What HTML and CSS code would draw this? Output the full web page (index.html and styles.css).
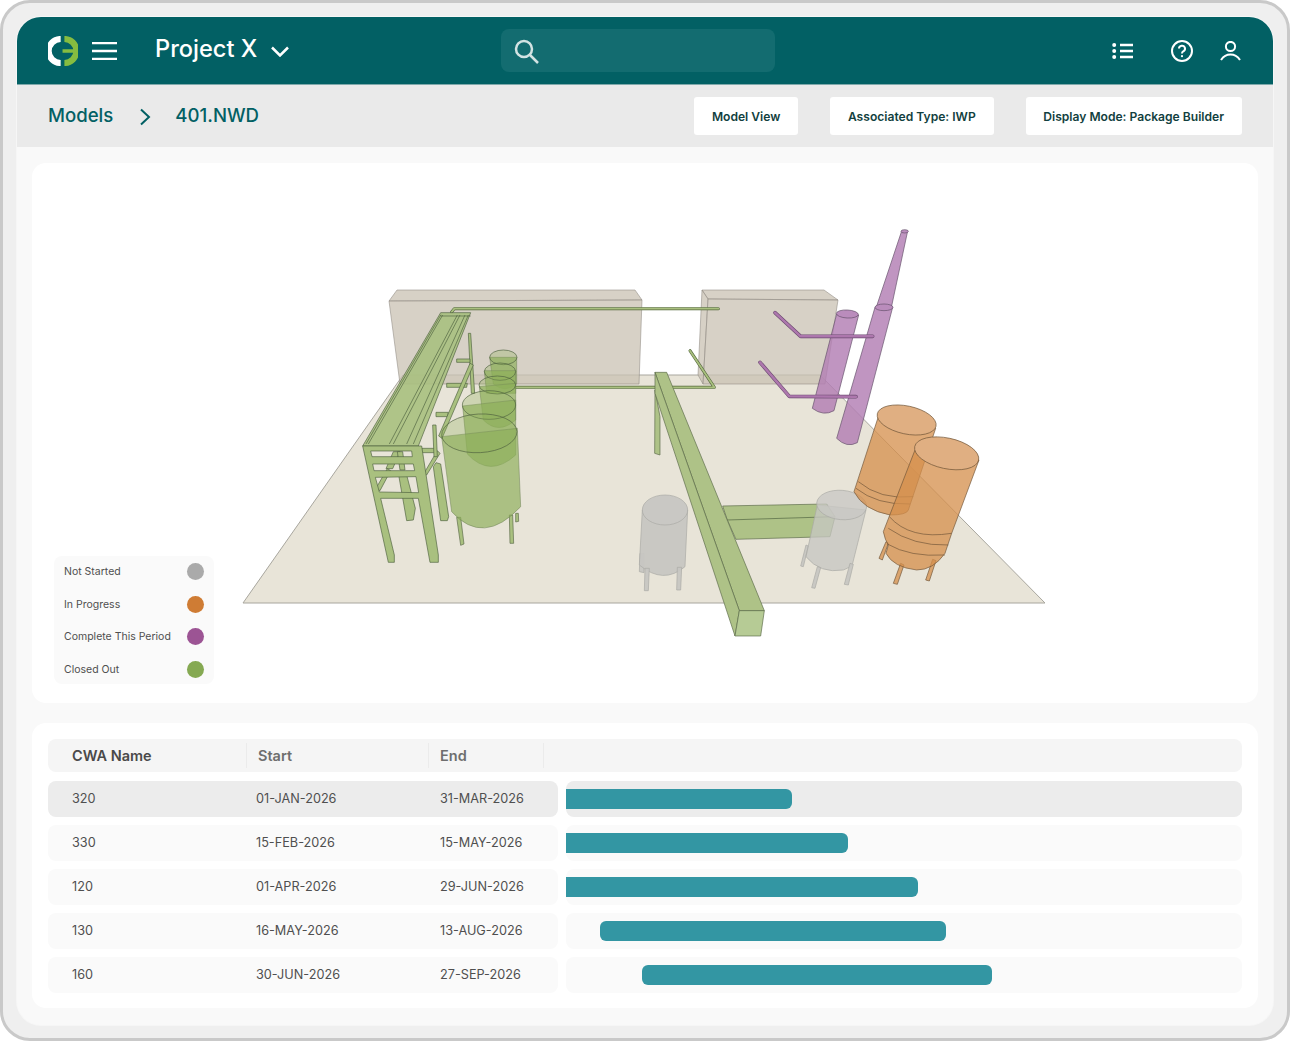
FILE: index.html
```html
<!DOCTYPE html>
<html lang="en">
<head>
<meta charset="utf-8">
<title>Project X</title>
<link rel="stylesheet" href="styles.css">
</head>
<body>
<div class="frame">
  <div class="app">
    <header class="topbar">
      <svg class="logo" width="30" height="30" viewBox="0 0 32 32">
        <path class="logo-w" d="M13.5 3.2A12.8 12.8 0 0 0 13.5 28.8"/>
        <path class="logo-g" d="M17.5 3.2A12.8 12.8 0 0 1 17.5 28.8"/>
        <path class="logo-b" d="M15.5 16H28"/>
      </svg>
      <svg class="ico burger" width="25" height="18" viewBox="0 0 25 18"><path d="M0 1H25M0 9H25M0 17H25"/></svg>
      <span class="project">Project X</span>
      <svg class="ico caret" width="18" height="11" viewBox="0 0 18 11"><path d="M1 1.5L9 9.5L17 1.5"/></svg>
      <div class="search">
        <svg class="ico soft" width="26" height="26" viewBox="0 0 26 26"><circle cx="11" cy="11" r="8"/><path d="M17 17L25 25"/></svg>
      </div>
      <div class="top-icons">
        <svg class="ico list" width="21" height="16" viewBox="0 0 21 16"><path d="M8 2H21M8 8H21M8 14H21"/><circle class="dot" cx="2.2" cy="2" r="2"/><circle class="dot" cx="2.2" cy="8" r="2"/><circle class="dot" cx="2.2" cy="14" r="2"/></svg>
        <svg class="ico thin" width="22" height="22" viewBox="0 0 22 22"><circle cx="11" cy="11" r="10"/><path d="M8 8.6A3 3 0 1 1 12.2 11.4C11.3 11.9 11 12.4 11 13.4"/><circle class="dot" cx="11" cy="16.2" r="1.1"/></svg>
        <svg class="ico thin" width="21" height="20" viewBox="0 0 21 20"><circle cx="10.5" cy="5.5" r="4.6"/><path d="M1 19C4 14.5 7 13.5 10.5 13.5S17 14.5 20 19"/></svg>
      </div>
    </header>

    <nav class="subbar">
      <a class="crumb">Models</a>
      <svg class="crumb-sep" width="12" height="18" viewBox="0 0 12 18"><path d="M2 1.5L10 9L2 16.5"/></svg>
      <a class="crumb">401.NWD</a>
      <div class="actions">
        <button class="btn">Model View</button>
        <button class="btn">Associated Type: IWP</button>
        <button class="btn">Display Mode: Package Builder</button>
      </div>
    </nav>

    <main class="content">
      <section class="card viewer">
        <svg class="scene" width="1226" height="540" viewBox="32 163 1226 540">
          <polygon class="floor" points="243,603 403,375 820,375 1045,603"/>

          <g class="walls">
            <polygon points="397,290 635,290 642,300 389,301"/>
            <polygon points="389,301 642,300 639,384 400,384"/>
            <polygon points="702,290 824,290 838,300 708,299"/>
            <polygon points="702,290 708,299 703,384 698,375"/>
            <polygon points="708,299 838,300 825,384 703,384"/>
          </g>

          <g transform="translate(350 280) scale(.33333)">
            <g class="pipe-g">
              <polyline class="o" points="305,96 313,86 1105,86"/><polyline class="i" points="305,96 313,86 1105,86"/>
              <polyline class="o" points="498,322 1093,322 1020,212"/><polyline class="i" points="498,322 1093,322 1020,212"/>
            </g>
            <g class="gr">
              <polygon points="355,160 362,160 374,340 364,340"/>
              <polygon points="320,237 360,237 360,247 320,247"/>
              <polygon points="290,310 352,310 350,322 290,322"/>
              <polygon points="258,397 295,397 292,410 258,410"/>
              <polygon points="215,505 258,505 258,518 215,518"/>
              <polygon points="360,250 370,255 276,475 266,468"/>
              <polygon points="262,512 270,520 230,585 222,580"/>
              <polygon points="248,435 258,435 262,530 252,530"/>
              <polygon points="250,560 258,548 272,552 296,710 292,722 272,722"/>
              <polygon points="146,585 170,585 196,685 190,720 170,722"/>
              <polygon points="108,566 130,515 150,515 128,566"/>
              <polygon points="142,515 158,515 165,570 150,570"/>
              <polygon points="78,625 112,566 122,572 90,632"/>
              <polygon class="deck" points="38,498 272,98 362,98 205,498"/>
              <path class="ln" d="M48 492L273 104M55 492L278 105M118 492L322 105M130 492L330 105M170 492L345 105M190 492L355 105M272 108H362"/>
              <path class="fr" fill-rule="evenodd" d="M38 498H215L265 825V847H240L205 655H92L133 825V847H115ZM62 513L66 530H187L185 513ZM68 552L72 572H194L190 552ZM76 592L88 636 206 638 198 590Z"/>
            </g>
            <g class="gt">
              <path d="M419 232L430 312Q465 340 500 312V232Z"/><ellipse cx="460" cy="232" rx="41" ry="22"/>
              <path d="M403 272L410 340H497V272Z"/><ellipse cx="450" cy="275" rx="47" ry="26"/>
              <path d="M388 320L400 420Q445 465 497 420V310Z"/><ellipse cx="442" cy="315" rx="55" ry="27"/>
              <path d="M338 378L352 522Q420 595 497 525V360Z"/><ellipse cx="417" cy="375" rx="80" ry="43"/>
              <polygon class="leg" points="320,712 332,712 342,792 332,796"/>
              <polygon class="leg" points="478,705 488,705 491,790 480,790"/>
              <polygon class="leg" points="497,700 505,700 506,724 497,726"/>
              <path d="M275 470L305 695Q400 800 512 680L502 445Z"/><ellipse cx="388" cy="460" rx="113" ry="58" transform="rotate(-3 388 460)"/>
            </g>
          </g>

          <g transform="translate(630 220) scale(.33333)">
            <g class="gr beam">
              <polygon points="75,510 90,590 90,705 74,700"/>
              <polygon points="278,858 590,852 615,890 600,950 318,958 292,900"/>
              <path class="ln" d="M292 900L615 890 590 852"/>
              <polygon points="75,457 110,457 403,1172 328,1172"/>
              <polygon points="75,457 328,1172 315,1248 75,520"/>
              <polygon class="front" points="328,1172 403,1172 392,1248 315,1248"/>
            </g>
            <g class="grey">
              <polygon points="30,1000 42,1000 42,1058 28,1055"/>
              <path d="M37 870L28 1035Q100 1095 165 1040L173 870Z"/><ellipse cx="105" cy="870" rx="68" ry="45"/>
              <polygon points="45,1045 58,1045 55,1112 43,1112"/>
              <polygon points="142,1042 155,1042 152,1110 140,1110"/>
              <polygon points="512,1038 528,975 535,978 520,1040"/>
              <path class="see" d="M562 855L528 1010Q570 1062 640 1050Q665 1040 668 1030L708 870Z"/><ellipse class="see" cx="635" cy="855" rx="75" ry="44" transform="rotate(5 635 855)"/>
              <polygon points="545,1103 562,1040 572,1043 555,1105"/>
              <polygon points="643,1093 660,1030 670,1033 655,1095"/>
            </g>
            <g class="orange">
              <polygon points="747,1015 768,965 775,970 757,1020"/>
              <polygon points="790,1090 812,1030 822,1035 802,1093"/>
              <polygon points="887,1080 908,1018 918,1022 898,1083"/>
              <path d="M745 590L672 815Q700 870 780 885Q830 885 835 870L917 625Z"/><ellipse cx="830" cy="600" rx="90" ry="42" transform="rotate(12 830 600)"/>
              <path class="ln" d="M685 785Q750 840 850 830M678 805Q740 855 840 852"/>
              <path d="M855 690L760 935Q765 960 775 975L768 1000Q790 1042 860 1050Q910 1050 945 1000L965 940L1047 720Z"/><ellipse cx="950" cy="700" rx="98" ry="46" transform="rotate(12 950 700)"/>
              <path class="ln" d="M778 890Q840 960 965 940M775 925Q850 978 955 975M772 972Q840 1012 945 1005"/>
            </g>
            <g class="purple">
              <path d="M620 282L547 565Q580 590 612 572L686 285Z"/><ellipse cx="652" cy="282" rx="33" ry="12" transform="rotate(3 652 282)"/>
              <polygon points="740,258 815,33 833,33 785,258"/><ellipse cx="824" cy="34" rx="11" ry="5"/>
              <path d="M735 262L620 655Q650 685 682 668L788 262Z"/><ellipse cx="762" cy="262" rx="27" ry="10"/>
            </g>
            <g class="pipe-p">
              <polyline class="o" points="435,278 512,349 728,349"/><polyline class="i" points="435,278 512,349 728,349"/>
              <polyline class="o" points="390,427 478,529 678,530"/><polyline class="i" points="390,427 478,529 678,530"/>
            </g>
          </g>
        </svg>

        <ul class="legend">
          <li class="legend-row">Not Started<i class="swatch s-grey"></i></li>
          <li class="legend-row">In Progress<i class="swatch s-orange"></i></li>
          <li class="legend-row">Complete This Period<i class="swatch s-purple"></i></li>
          <li class="legend-row">Closed Out<i class="swatch s-green"></i></li>
        </ul>
      </section>

      <section class="card schedule">
        <div class="thead">
          <span class="th th-name">CWA Name</span>
          <span class="th th-start">Start</span>
          <span class="th th-end">End</span>
        </div>
        <div class="row is-active">
          <div class="info"><span>320</span><span>01-JAN-2026</span><span>31-MAR-2026</span></div>
          <div class="track"><div class="bar flat" style="width:226px"></div></div>
        </div>
        <div class="row">
          <div class="info"><span>330</span><span>15-FEB-2026</span><span>15-MAY-2026</span></div>
          <div class="track"><div class="bar flat" style="width:282px"></div></div>
        </div>
        <div class="row">
          <div class="info"><span>120</span><span>01-APR-2026</span><span>29-JUN-2026</span></div>
          <div class="track"><div class="bar flat" style="width:352px"></div></div>
        </div>
        <div class="row">
          <div class="info"><span>130</span><span>16-MAY-2026</span><span>13-AUG-2026</span></div>
          <div class="track"><div class="bar" style="margin-left:34px;width:346px"></div></div>
        </div>
        <div class="row">
          <div class="info"><span>160</span><span>30-JUN-2026</span><span>27-SEP-2026</span></div>
          <div class="track"><div class="bar" style="margin-left:76px;width:350px"></div></div>
        </div>
      </section>
    </main>
  </div>
</div>
</body>
</html>
```

FILE: styles.css
```css
* { box-sizing: border-box; }
html, body { margin: 0; background: #fff; }
body { font-family: Inter, "Liberation Sans", sans-serif; color: #4f4f4f; }

.frame {
  width: 1290px; height: 1041px;
  border: 3px solid #c9c9c9; border-radius: 30px;
  background: #efefef;
  padding: 14px 14px 13px;
}
.app {
  height: 100%; border-radius: 24px; overflow: hidden;
  background: #f9f9f9;
  display: flex; flex-direction: column;
  box-shadow: 0 0 0 1px #f6f6f6;
}

/* top bar */
.topbar {
  flex: none; height: 68px; background: #026064;
  border-bottom: 1px solid #7fa9ab;
  display: flex; align-items: center;
  padding-left: 31px; padding-right: 32px;
}
.logo { flex: none; margin-right: 14px; margin-top: 1px; }
.logo path { fill: none; }
.logo-w { stroke: #fff; stroke-width: 6.5; }
.logo-g { stroke: #86bc40; stroke-width: 6.5; }
.logo-b { stroke: #86bc40; stroke-width: 3.5; }
.ico { flex: none; display: block; }
.ico path, .ico circle { fill: none; stroke: #fff; stroke-width: 2.5; }
.ico.thin path, .ico.thin circle { stroke-width: 2; }
.ico.soft path, .ico.soft circle { stroke: #d3e3e3; }
.ico circle.dot { fill: #fff; stroke: none; }
.burger { margin-top: 1px; }
.project {
  margin-left: 38px; font-size: 23.6px; font-weight: 500; color: #fff;
  line-height: 30px; white-space: nowrap; width: 102px; margin-top: -3px;
}
.caret { margin-left: 14px; margin-top: 1px; }
.search {
  margin-left: 212px; width: 274px; height: 43px;
  background: #136c70; border-radius: 8px;
  display: flex; align-items: center; padding-left: 12px;
}
.top-icons {
  margin-left: auto; display: flex; align-items: center; gap: 27px;
}
.list { margin-right: 11px; }

/* breadcrumb bar */
.subbar {
  flex: none; height: 62px; background: #eaeaea;
  display: flex; align-items: center; padding: 0 31px;
}
.crumb { font-size: 18.6px; font-weight: 500; color: #026064; line-height: 24px; margin-top: -2px; }
.crumb-sep { margin: 1px 24px 0 26px; flex: none; }
.crumb-sep path { fill: none; stroke: #026064; stroke-width: 2; }
.actions { margin-left: auto; display: flex; gap: 32px; }
.btn {
  height: 38px; border: 0; border-radius: 3px; background: #fff;
  padding: 0 18px 0 17.5px; font: 600 12.1px Inter, "Liberation Sans", sans-serif;
  color: #123f40;
}

/* content */
.content {
  flex: 1; padding: 16px 15px 17px;
  display: flex; flex-direction: column; gap: 20px;
}
.card { background: #fff; border-radius: 14px; }
.viewer { position: relative; height: 540px; flex: none; overflow: hidden; }
.scene { display: block; }

/* 3D model */
.floor { fill: #e8e4d8; stroke: #a8a69e; stroke-width: 1; stroke-linejoin: round; }
.walls polygon { fill: #c9c1b3; fill-opacity: .75; stroke: #8f8b83; stroke-opacity: .7; stroke-width: .8; }
.gr polygon, .gr path.fr { fill: #a9c07f; stroke: #4f6240; stroke-width: 2; stroke-linejoin: round; }
.gr .deck { fill: #a9c07f; fill-opacity: .9; }
.gr .ln { fill: none; stroke: #4f6240; stroke-width: 2; }
.beam polygon { fill: #aec287; stroke: #5a6a48; }
.beam .front { fill: #b6cb95; }
.gt path { fill: #8db05a; fill-opacity: .68; stroke: #6d8058; stroke-width: 1.5; }
.gt ellipse { fill: #8db05a; fill-opacity: .3; stroke: #4f6240; stroke-width: 2; }
.gt .leg { fill: #a9c07f; stroke: #5a6a48; stroke-width: 2; }
.grey path, .grey polygon { fill: #c7c6c2; stroke: #a9a9a5; stroke-width: 2; fill-opacity: .95; }
.grey ellipse { fill: #c9c8c4; stroke: #a9a9a5; stroke-width: 2; }
.grey .see { fill-opacity: .78; }
.orange path, .orange polygon { fill: #d58f4c; fill-opacity: .76; stroke: #6f5538; stroke-width: 2; }
.orange ellipse { fill: #e0af82; stroke: #6f5538; stroke-width: 2; }
.orange path.ln { fill: none; }
.purple path, .purple polygon { fill: #b27eb3; fill-opacity: .82; stroke: #64506a; stroke-width: 2; }
.purple ellipse { fill: #ba8cbc; stroke: #64506a; stroke-width: 2; }
.pipe-g polyline, .pipe-p polyline { fill: none; stroke-linecap: round; stroke-linejoin: round; }
.pipe-g .o { stroke: #56693f; stroke-width: 9; }
.pipe-g .i { stroke: #a9c07f; stroke-width: 5.5; }
.pipe-p .o { stroke: #6b4a70; stroke-width: 11; }
.pipe-p .i { stroke: #ad77ad; stroke-width: 7.5; }

/* legend */
.legend {
  position: absolute; left: 22px; bottom: 19px;
  width: 160px; height: 128px; margin: 0; padding: 7px 10px 0;
  list-style: none; background: #fafafa; border-radius: 8px;
  display: flex; flex-direction: column; gap: 15.6px;
}
.legend-row {
  display: flex; align-items: center; justify-content: space-between;
  font-size: 10.5px; line-height: 17px; color: #4f4f4f;
}
.swatch { width: 17px; height: 17px; border-radius: 50%; flex: none; }
.s-grey { background: #aaa; }
.s-orange { background: #cf7c34; }
.s-purple { background: #9c5494; }
.s-green { background: #85a952; }

/* schedule */
.schedule {
  flex: none; height: 285px; padding: 16px;
  display: flex; flex-direction: column; gap: 8px;
}
.thead {
  flex: none; height: 33px; margin-bottom: 1px;
  background: #f5f5f5; border-radius: 8px;
  display: flex; align-items: center;
}
.th { font-size: 14.5px; font-weight: 600; color: #6e6e6e; line-height: 25px; }
.th-name { width: 199px; padding-left: 24px; color: #4a4a4a; border-right: 1px solid #ebebeb; }
.th-start { width: 182px; padding-left: 11px; border-right: 1px solid #ebebeb; }
.th-end { width: 115px; padding-left: 11px; border-right: 1px solid #ebebeb; }
.row {
  flex: none; height: 36px;
  display: grid; grid-template-columns: 510px 676px; gap: 8px;
}
.info, .track { background: #fafafa; border-radius: 8px; }
.info {
  display: grid; grid-template-columns: 184px 184px 1fr;
  align-items: center; padding: 0 0 2px 24px;
  font-size: 12.7px; color: #4f4f4f;
}
.track { display: flex; align-items: center; }
.is-active .info, .is-active .track { background: #ececec; }
.bar { height: 20px; background: #3396a3; border-radius: 6px; }
.bar.flat { border-radius: 0 6px 6px 0; }
```
